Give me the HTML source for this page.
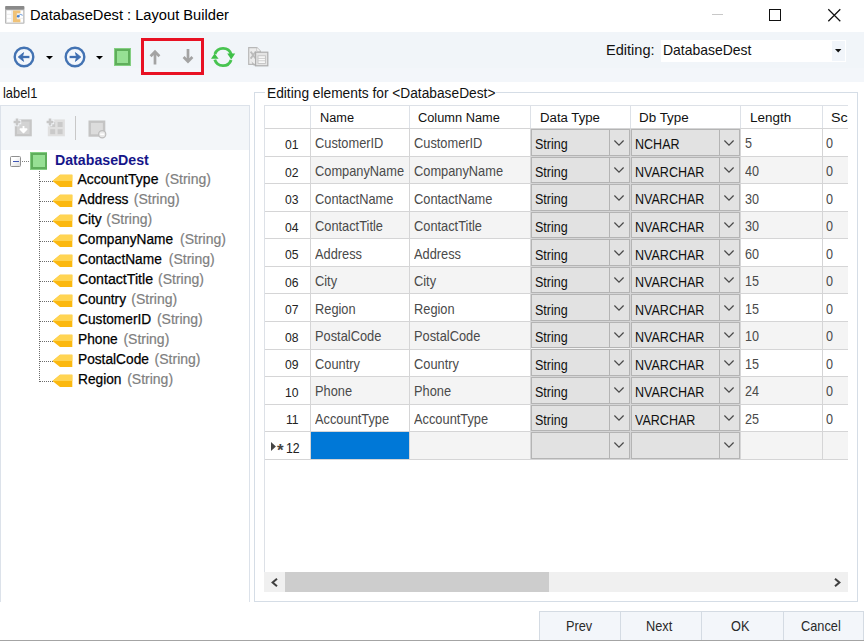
<!DOCTYPE html>
<html><head><meta charset="utf-8"><title>DatabaseDest : Layout Builder</title>
<style>
html,body{margin:0;padding:0;}
body{width:864px;height:641px;position:relative;overflow:hidden;background:#fff;font-family:"Liberation Sans",sans-serif;}
.t{position:absolute;white-space:pre;}
.b{position:absolute;box-sizing:border-box;}
svg{position:absolute;overflow:visible;}
</style></head><body>
<div class="t" style="left:30.00px;top:5.40px;font-size:15.5px;line-height:20px;color:#000;transform:scaleX(0.9466);transform-origin:0 0;">DatabaseDest : Layout Builder</div>
<svg style="left:5.2px;top:6px" width="20" height="18" viewBox="0 0 20 18">
<rect x="0" y="0" width="19.5" height="17.7" rx="1" fill="#b9b9b9"/>
<rect x="0.3" y="0" width="18.9" height="3.6" rx="1" fill="#8a8a8a"/>
<rect x="1.2" y="4.2" width="17.1" height="12.6" fill="#ececec"/>
<g fill="#fff"><rect x="2" y="4.8" width="4.2" height="3"/><rect x="2" y="8.8" width="4.2" height="3"/><rect x="2" y="12.8" width="4.2" height="3"/>
<rect x="14.6" y="4.8" width="3.4" height="3"/><rect x="14.6" y="8.8" width="3.4" height="3"/><rect x="14.6" y="12.8" width="3.4" height="3"/></g>
<path d="M8 4.6h7.4v2.6h-3.6v6h3.6v3H8z" fill="#f0c277"/>
<circle cx="13.2" cy="10.2" r="1.3" fill="#3c7bd0"/>
<path d="M13.4 10l2.2-1.6 2 1" fill="none" stroke="#5b93dd" stroke-width="0.9"/>
</svg>
<div class="b" style="left:711.50px;top:14.00px;width:11.70px;height:1.00px;background:#c8c8c8;"></div>
<div class="b" style="left:768.70px;top:8.80px;width:12.60px;height:12.20px;border:1.2px solid #111;"></div>
<svg style="left:828px;top:9px" width="13" height="13" viewBox="0 0 13 13"><path d="M0.3 0.3L12.3 12.3M12.3 0.3L0.3 12.3" stroke="#111" stroke-width="1.25" fill="none"/></svg>
<div class="b" style="left:0.00px;top:32.00px;width:864.00px;height:49.60px;background:#f1f5f9;"></div>
<div class="b" style="left:0.00px;top:67.80px;width:864.00px;height:13.80px;background:#f3f6fa;"></div>
<svg style="left:12.3px;top:45px" width="24" height="24" viewBox="-12 -12 24 24"><circle cx="0" cy="0" r="9.3" fill="#f3f7fc" stroke="#4373b3" stroke-width="2.4"/><path d="M5.4 0H-2" fill="none" stroke="#3f6fb2" stroke-width="2.3"/><path d="M-0.4 -4.4L-5.8 0L-0.4 4.4L-1.6 0z" fill="#3f6fb2" stroke="#3f6fb2" stroke-width="0.8" stroke-linejoin="round"/></svg>
<svg style="left:63.0px;top:45px" width="24" height="24" viewBox="-12 -12 24 24"><circle cx="0" cy="0" r="9.3" fill="#f3f7fc" stroke="#4373b3" stroke-width="2.4"/><path d="M-5.4 0H2" fill="none" stroke="#3f6fb2" stroke-width="2.3"/><path d="M0.4 -4.4L5.8 0L0.4 4.4L1.6 0z" fill="#3f6fb2" stroke="#3f6fb2" stroke-width="0.8" stroke-linejoin="round"/></svg>
<svg style="left:45.7px;top:55.800000000000004px" width="7" height="3.6" viewBox="0 0 7 3.6"><path d="M0 0H7L3.5 3.6z" fill="#000"/></svg>
<svg style="left:95.8px;top:55.800000000000004px" width="7" height="3.6" viewBox="0 0 7 3.6"><path d="M0 0H7L3.5 3.6z" fill="#000"/></svg>
<div class="b" style="left:114.00px;top:48.00px;width:17.00px;height:17.70px;background:#84cf82;"></div><div class="b" style="left:114.80px;top:48.80px;width:15.40px;height:16.10px;background:#97e094;border:2.7px solid #5fae5b;"></div>
<div class="b" style="left:140.90px;top:37.90px;width:63.10px;height:36.90px;border:3.8px solid #e81123;"></div>
<svg style="left:149.1px;top:50.0px" width="12" height="14.599999999999994" viewBox="-6 0 12 14.599999999999994"><path d="M0 14.599999999999994V2M-4.4 6.2L0 1.6L4.4 6.2" fill="none" stroke="#a3a3a3" stroke-width="2.7"/></svg>
<svg style="left:181.5px;top:49.4px" width="12" height="14.200000000000003" viewBox="-6 0 12 14.200000000000003"><path d="M0 0V12.200000000000003M-4.4 8.000000000000004L0 12.600000000000003L4.4 8.000000000000004" fill="none" stroke="#a3a3a3" stroke-width="2.7"/></svg>
<svg style="left:211px;top:45px" width="24" height="24" viewBox="-12 -12 24 24">
<path d="M-8.1 -2.9A8.6 8.6 0 0 1 8.2 -2.6" fill="none" stroke="#48c450" stroke-width="2.9"/>
<path d="M8.1 2.9A8.6 8.6 0 0 1 -8.2 2.6" fill="none" stroke="#48c450" stroke-width="2.9"/>
<path d="M4.2 -3.4L12.2 -3.4L8.2 2.6z" fill="#3fc047"/>
<path d="M-12 1.8L-4.4 1.8L-8.4 -3.6z" fill="#3fc047"/>
</svg>
<svg style="left:247.5px;top:47px" width="21" height="20" viewBox="0 0 21 20">
<path d="M0.7 0.7H8.8L12.4 4.2V17.4H0.7z" fill="#ececec" stroke="#b8b8b8" stroke-width="1.2"/>
<path d="M8.8 0.7V4.2H12.4" fill="#fff" stroke="#c4c4c4" stroke-width="0.9"/>
<path d="M2.6 4.6L7.8 11.6M7.8 4.6L2.6 11.6" stroke="#bcbcbc" stroke-width="1.8"/>
<rect x="7.6" y="5.2" width="12.2" height="13.6" fill="#e4e4e4" stroke="#adadad" stroke-width="1.2"/>
<rect x="10" y="8.8" width="7.4" height="7.6" fill="#fafafa" stroke="#c0c0c0" stroke-width="0.9"/>
<path d="M10 11.4H17.4M10 13.8H17.4" stroke="#c8c8c8" stroke-width="0.9"/>
<path d="M3.4 14.2L6.6 17.4L6.6 19.2L4.6 17.6z" fill="#b5b5b5"/>
</svg>
<div class="t" style="left:605.60px;top:39.90px;font-size:15px;line-height:20px;color:#111;transform:scaleX(0.9714);transform-origin:0 0;">Editing:</div>
<div class="b" style="left:661.40px;top:39.60px;width:184.60px;height:22.20px;background:#fff;"></div>
<div class="b" style="left:831.70px;top:40.60px;width:13.30px;height:20.20px;background:#f1f5fa;"></div>
<div class="t" style="left:662.90px;top:39.90px;font-size:15px;line-height:20px;color:#111;transform:scaleX(0.9300);transform-origin:0 0;">DatabaseDest</div>
<svg style="left:835.4px;top:48.9px" width="6.4" height="3.4" viewBox="0 0 6.4 3.4"><path d="M0 0H6.4L3.2 3.4z" fill="#111"/></svg>
<div class="t" style="left:2.60px;top:83.00px;font-size:14.5px;line-height:20px;color:#111;transform:scaleX(0.8889);transform-origin:0 0;">label1</div>
<div class="b" style="left:0.00px;top:104.70px;width:250.00px;height:497.50px;background:#fff;border:1px solid #dce2ea;border-bottom:none;"></div>
<div class="b" style="left:1.00px;top:105.70px;width:248.00px;height:44.70px;background:#f3f6f9;"></div>
<svg style="left:13.4px;top:118.4px" width="20" height="20" viewBox="0 0 20 20">
<rect x="1.8" y="1.4" width="17" height="16.9" fill="#c6c6c6"/>
<rect x="4" y="3.6" width="12.6" height="12.5" fill="#d3d3d3"/>
<path d="M10.5 8V11.6M7.4 11.2H13.6L10.5 14.4z" fill="#fff" stroke="#fff" stroke-width="1.8" stroke-linejoin="round"/>
<path d="M4 -0.2V8.2M-0.2 4H8.2" stroke="#f3f6f9" stroke-width="4.4"/><path d="M4 0.6V7.4M0.6 4H7.4" stroke="#c7c7c7" stroke-width="2.6"/>
</svg>
<svg style="left:46px;top:118.4px" width="20" height="20" viewBox="0 0 20 20">
<rect x="1.8" y="1.4" width="17.1" height="16.9" fill="#e0e0e0"/>
<g fill="#cacaca"><rect x="4.2" y="4" width="5" height="5"/><rect x="11.6" y="4" width="5" height="5"/><rect x="4.2" y="11.2" width="5" height="5"/><rect x="11.6" y="11.2" width="5" height="5"/></g>
<path d="M4 -0.2V8.2M-0.2 4H8.2" stroke="#f3f6f9" stroke-width="4.4"/><path d="M4 0.6V7.4M0.6 4H7.4" stroke="#c7c7c7" stroke-width="2.6"/>
</svg>
<div class="b" style="left:75.00px;top:116.00px;width:1.20px;height:23.50px;background:#c8c8c8;"></div>
<svg style="left:87.5px;top:119.5px" width="20" height="19" viewBox="0 0 20 19">
<rect x="1.7" y="1.7" width="14.4" height="13.8" fill="#dcdcdc" stroke="#c4c4c4" stroke-width="2.4"/>
<circle cx="14.2" cy="14.3" r="3.6" fill="#e9e9e9" stroke="#bdbdbd" stroke-width="1.2"/>
<path d="M12.2 14.3H16.2" stroke="#fff" stroke-width="1.5"/>
</svg>
<svg style="left:0;top:150px" width="250" height="250" viewBox="0 150 250 250"><path d="M22 161.5H30" stroke="#808080" stroke-width="1" stroke-dasharray="1 1"/><path d="M39.5 171V382" stroke="#6a6a6a" stroke-width="1" stroke-dasharray="1 1"/><path d="M40 181.5H53" stroke="#6a6a6a" stroke-width="1" stroke-dasharray="1 1"/><path d="M40 201.5H53" stroke="#6a6a6a" stroke-width="1" stroke-dasharray="1 1"/><path d="M40 221.5H53" stroke="#6a6a6a" stroke-width="1" stroke-dasharray="1 1"/><path d="M40 241.5H53" stroke="#6a6a6a" stroke-width="1" stroke-dasharray="1 1"/><path d="M40 261.5H53" stroke="#6a6a6a" stroke-width="1" stroke-dasharray="1 1"/><path d="M40 281.5H53" stroke="#6a6a6a" stroke-width="1" stroke-dasharray="1 1"/><path d="M40 301.5H53" stroke="#6a6a6a" stroke-width="1" stroke-dasharray="1 1"/><path d="M40 321.5H53" stroke="#6a6a6a" stroke-width="1" stroke-dasharray="1 1"/><path d="M40 341.5H53" stroke="#6a6a6a" stroke-width="1" stroke-dasharray="1 1"/><path d="M40 361.5H53" stroke="#6a6a6a" stroke-width="1" stroke-dasharray="1 1"/><path d="M40 381.5H53" stroke="#6a6a6a" stroke-width="1" stroke-dasharray="1 1"/></svg>
<div class="b" style="left:10.00px;top:156.00px;width:11.20px;height:11.00px;border:1px solid #8f8f8f;border-radius:1.5px;background:linear-gradient(135deg,#fff 30%,#dcdcdc);"></div>
<div class="b" style="left:12.50px;top:161.00px;width:6.40px;height:1.30px;background:#3f55b5;"></div>
<div class="b" style="left:30.20px;top:152.10px;width:17.20px;height:17.50px;background:#84cf82;"></div><div class="b" style="left:31.00px;top:152.90px;width:15.60px;height:15.90px;background:#97e094;border:2.7px solid #5fae5b;"></div>
<div class="t" style="left:55.00px;top:149.50px;font-size:14px;line-height:20px;color:#16168a;font-weight:bold;transform:scaleX(1.0124);transform-origin:0 0;">DatabaseDest</div>
<svg style="left:52px;top:174px" width="21" height="14" viewBox="0 0 21 14"><path d="M0.5 7.1L8 0.7H20.3V12.9H8z" fill="#fbb80f"/><path d="M0.5 7.1L8 0.7H20.3V7.1z" fill="#ffd452"/></svg>
<div class="t" style="left:77.50px;top:168.75px;font-size:14px;line-height:20px;color:#000;-webkit-text-stroke:0.25px #000;">AccountType</div>
<div class="t" style="left:165.00px;top:168.75px;font-size:14px;line-height:20px;color:#808080;-webkit-text-stroke:0.2px #808080;">(String)</div>
<svg style="left:52px;top:194px" width="21" height="14" viewBox="0 0 21 14"><path d="M0.5 7.1L8 0.7H20.3V12.9H8z" fill="#fbb80f"/><path d="M0.5 7.1L8 0.7H20.3V7.1z" fill="#ffd452"/></svg>
<div class="t" style="left:77.50px;top:188.75px;font-size:14px;line-height:20px;color:#000;transform:scaleX(0.9833);transform-origin:0 0;-webkit-text-stroke:0.25px #000;">Address</div>
<div class="t" style="left:133.75px;top:188.75px;font-size:14px;line-height:20px;color:#808080;-webkit-text-stroke:0.2px #808080;">(String)</div>
<svg style="left:52px;top:214px" width="21" height="14" viewBox="0 0 21 14"><path d="M0.5 7.1L8 0.7H20.3V12.9H8z" fill="#fbb80f"/><path d="M0.5 7.1L8 0.7H20.3V7.1z" fill="#ffd452"/></svg>
<div class="t" style="left:77.50px;top:208.75px;font-size:14px;line-height:20px;color:#000;transform:scaleX(0.9851);transform-origin:0 0;-webkit-text-stroke:0.25px #000;">City</div>
<div class="t" style="left:106.25px;top:208.75px;font-size:14px;line-height:20px;color:#808080;-webkit-text-stroke:0.2px #808080;">(String)</div>
<svg style="left:52px;top:234px" width="21" height="14" viewBox="0 0 21 14"><path d="M0.5 7.1L8 0.7H20.3V12.9H8z" fill="#fbb80f"/><path d="M0.5 7.1L8 0.7H20.3V7.1z" fill="#ffd452"/></svg>
<div class="t" style="left:77.50px;top:228.75px;font-size:14px;line-height:20px;color:#000;transform:scaleX(0.9767);transform-origin:0 0;-webkit-text-stroke:0.25px #000;">CompanyName</div>
<div class="t" style="left:180.00px;top:228.75px;font-size:14px;line-height:20px;color:#808080;-webkit-text-stroke:0.2px #808080;">(String)</div>
<svg style="left:52px;top:254px" width="21" height="14" viewBox="0 0 21 14"><path d="M0.5 7.1L8 0.7H20.3V12.9H8z" fill="#fbb80f"/><path d="M0.5 7.1L8 0.7H20.3V7.1z" fill="#ffd452"/></svg>
<div class="t" style="left:77.50px;top:248.75px;font-size:14px;line-height:20px;color:#000;transform:scaleX(0.9785);transform-origin:0 0;-webkit-text-stroke:0.25px #000;">ContactName</div>
<div class="t" style="left:168.75px;top:248.75px;font-size:14px;line-height:20px;color:#808080;-webkit-text-stroke:0.2px #808080;">(String)</div>
<svg style="left:52px;top:274px" width="21" height="14" viewBox="0 0 21 14"><path d="M0.5 7.1L8 0.7H20.3V12.9H8z" fill="#fbb80f"/><path d="M0.5 7.1L8 0.7H20.3V7.1z" fill="#ffd452"/></svg>
<div class="t" style="left:77.50px;top:268.75px;font-size:14px;line-height:20px;color:#000;transform:scaleX(1.0111);transform-origin:0 0;-webkit-text-stroke:0.25px #000;">ContactTitle</div>
<div class="t" style="left:158.00px;top:268.75px;font-size:14px;line-height:20px;color:#808080;-webkit-text-stroke:0.2px #808080;">(String)</div>
<svg style="left:52px;top:294px" width="21" height="14" viewBox="0 0 21 14"><path d="M0.5 7.1L8 0.7H20.3V12.9H8z" fill="#fbb80f"/><path d="M0.5 7.1L8 0.7H20.3V7.1z" fill="#ffd452"/></svg>
<div class="t" style="left:77.50px;top:288.75px;font-size:14px;line-height:20px;color:#000;transform:scaleX(0.9792);transform-origin:0 0;-webkit-text-stroke:0.25px #000;">Country</div>
<div class="t" style="left:131.25px;top:288.75px;font-size:14px;line-height:20px;color:#808080;-webkit-text-stroke:0.2px #808080;">(String)</div>
<svg style="left:52px;top:314px" width="21" height="14" viewBox="0 0 21 14"><path d="M0.5 7.1L8 0.7H20.3V12.9H8z" fill="#fbb80f"/><path d="M0.5 7.1L8 0.7H20.3V7.1z" fill="#ffd452"/></svg>
<div class="t" style="left:77.50px;top:308.75px;font-size:14px;line-height:20px;color:#000;transform:scaleX(0.9799);transform-origin:0 0;-webkit-text-stroke:0.25px #000;">CustomerID</div>
<div class="t" style="left:156.88px;top:308.75px;font-size:14px;line-height:20px;color:#808080;-webkit-text-stroke:0.2px #808080;">(String)</div>
<svg style="left:52px;top:334px" width="21" height="14" viewBox="0 0 21 14"><path d="M0.5 7.1L8 0.7H20.3V12.9H8z" fill="#fbb80f"/><path d="M0.5 7.1L8 0.7H20.3V7.1z" fill="#ffd452"/></svg>
<div class="t" style="left:77.50px;top:328.75px;font-size:14px;line-height:20px;color:#000;transform:scaleX(0.9815);transform-origin:0 0;-webkit-text-stroke:0.25px #000;">Phone</div>
<div class="t" style="left:123.43px;top:328.75px;font-size:14px;line-height:20px;color:#808080;-webkit-text-stroke:0.2px #808080;">(String)</div>
<svg style="left:52px;top:354px" width="21" height="14" viewBox="0 0 21 14"><path d="M0.5 7.1L8 0.7H20.3V12.9H8z" fill="#fbb80f"/><path d="M0.5 7.1L8 0.7H20.3V7.1z" fill="#ffd452"/></svg>
<div class="t" style="left:77.50px;top:348.75px;font-size:14px;line-height:20px;color:#000;transform:scaleX(0.9793);transform-origin:0 0;-webkit-text-stroke:0.25px #000;">PostalCode</div>
<div class="t" style="left:154.58px;top:348.75px;font-size:14px;line-height:20px;color:#808080;-webkit-text-stroke:0.2px #808080;">(String)</div>
<svg style="left:52px;top:374px" width="21" height="14" viewBox="0 0 21 14"><path d="M0.5 7.1L8 0.7H20.3V12.9H8z" fill="#fbb80f"/><path d="M0.5 7.1L8 0.7H20.3V7.1z" fill="#ffd452"/></svg>
<div class="t" style="left:77.50px;top:368.75px;font-size:14px;line-height:20px;color:#000;transform:scaleX(0.9797);transform-origin:0 0;-webkit-text-stroke:0.25px #000;">Region</div>
<div class="t" style="left:127.17px;top:368.75px;font-size:14px;line-height:20px;color:#808080;-webkit-text-stroke:0.2px #808080;">(String)</div>
<div class="b" style="left:253.90px;top:92.20px;width:603.80px;height:509.80px;border:1px solid #d5dde6;"></div>
<div class="b" style="left:265.00px;top:86.00px;width:230.60px;height:14.00px;background:#fff;"></div>
<div class="t" style="left:266.80px;top:83.40px;font-size:14px;line-height:20px;color:#111;transform:scaleX(0.9816);transform-origin:0 0;">Editing elements for &lt;DatabaseDest&gt;</div>
<div class="b" style="left:0;top:0;width:848px;height:641px;overflow:hidden;">
<div class="b" style="left:310.60px;top:156.29px;width:537.40px;height:27.54px;background:#f4f4f4;"></div>
<div class="b" style="left:310.60px;top:211.37px;width:537.40px;height:27.54px;background:#f4f4f4;"></div>
<div class="b" style="left:310.60px;top:266.45px;width:537.40px;height:27.54px;background:#f4f4f4;"></div>
<div class="b" style="left:310.60px;top:321.53px;width:537.40px;height:27.54px;background:#f4f4f4;"></div>
<div class="b" style="left:310.60px;top:376.61px;width:537.40px;height:27.54px;background:#f4f4f4;"></div>
<div class="b" style="left:310.60px;top:431.69px;width:537.40px;height:27.54px;background:#f4f4f4;"></div>
<div class="b" style="left:311.30px;top:432.29px;width:97.90px;height:26.74px;background:#0078d7;"></div>
<div class="b" style="left:264.25px;top:104.60px;width:583.75px;height:1.30px;background:#dde1e7;"></div>
<div class="b" style="left:264.25px;top:127.70px;width:583.75px;height:1.45px;background:#d5d5d6;"></div>
<div class="b" style="left:264.25px;top:155.70px;width:583.75px;height:1.45px;background:#d5d5d6;"></div>
<div class="b" style="left:264.25px;top:182.70px;width:583.75px;height:1.45px;background:#d5d5d6;"></div>
<div class="b" style="left:264.25px;top:210.70px;width:583.75px;height:1.45px;background:#d5d5d6;"></div>
<div class="b" style="left:264.25px;top:237.70px;width:583.75px;height:1.45px;background:#d5d5d6;"></div>
<div class="b" style="left:264.25px;top:265.70px;width:583.75px;height:1.45px;background:#d5d5d6;"></div>
<div class="b" style="left:264.25px;top:292.70px;width:583.75px;height:1.45px;background:#d5d5d6;"></div>
<div class="b" style="left:264.25px;top:320.70px;width:583.75px;height:1.45px;background:#d5d5d6;"></div>
<div class="b" style="left:264.25px;top:348.70px;width:583.75px;height:1.45px;background:#d5d5d6;"></div>
<div class="b" style="left:264.25px;top:375.70px;width:583.75px;height:1.45px;background:#d5d5d6;"></div>
<div class="b" style="left:264.25px;top:403.70px;width:583.75px;height:1.45px;background:#d5d5d6;"></div>
<div class="b" style="left:264.25px;top:430.70px;width:583.75px;height:1.45px;background:#d5d5d6;"></div>
<div class="b" style="left:264.25px;top:458.70px;width:583.75px;height:1.45px;background:#d5d5d6;"></div>
<div class="b" style="left:263.75px;top:105.20px;width:1.30px;height:466.80px;background:#dde1e7;"></div>
<div class="b" style="left:309.95px;top:128.75px;width:1.30px;height:330.48px;background:#d5d5d6;"></div>
<div class="b" style="left:309.95px;top:105.20px;width:1.30px;height:22.95px;background:#dde1e7;"></div>
<div class="b" style="left:408.85px;top:128.75px;width:1.30px;height:330.48px;background:#d5d5d6;"></div>
<div class="b" style="left:408.85px;top:105.20px;width:1.30px;height:22.95px;background:#dde1e7;"></div>
<div class="b" style="left:530.10px;top:128.75px;width:1.30px;height:330.48px;background:#d5d5d6;"></div>
<div class="b" style="left:530.10px;top:105.20px;width:1.30px;height:22.95px;background:#dde1e7;"></div>
<div class="b" style="left:629.85px;top:128.75px;width:1.30px;height:330.48px;background:#d5d5d6;"></div>
<div class="b" style="left:629.85px;top:105.20px;width:1.30px;height:22.95px;background:#dde1e7;"></div>
<div class="b" style="left:739.85px;top:128.75px;width:1.30px;height:330.48px;background:#d5d5d6;"></div>
<div class="b" style="left:739.85px;top:105.20px;width:1.30px;height:22.95px;background:#dde1e7;"></div>
<div class="b" style="left:821.60px;top:128.75px;width:1.30px;height:330.48px;background:#d5d5d6;"></div>
<div class="b" style="left:821.60px;top:105.20px;width:1.30px;height:22.95px;background:#dde1e7;"></div>
<div class="t" style="left:319.90px;top:107.70px;font-size:12px;line-height:20px;color:#111;transform:scaleX(1.0622);transform-origin:0 0;">Name</div>
<div class="t" style="left:418.00px;top:107.70px;font-size:12px;line-height:20px;color:#111;transform:scaleX(1.0666);transform-origin:0 0;">Column Name</div>
<div class="t" style="left:539.95px;top:107.70px;font-size:12px;line-height:20px;color:#111;transform:scaleX(1.1004);transform-origin:0 0;">Data Type</div>
<div class="t" style="left:639.20px;top:107.70px;font-size:12px;line-height:20px;color:#111;transform:scaleX(1.1175);transform-origin:0 0;">Db Type</div>
<div class="t" style="left:750.20px;top:107.70px;font-size:12px;line-height:20px;color:#111;transform:scaleX(1.1225);transform-origin:0 0;">Length</div>
<div class="t" style="left:831.45px;top:107.70px;font-size:12px;line-height:20px;color:#111;transform:scaleX(1.1900);transform-origin:0 0;">Scale</div>
<div class="t" style="left:285.29px;top:135.00px;font-size:13.5px;line-height:20px;color:#222;transform:scaleX(0.9000);transform-origin:0 0;">01</div>
<div class="t" style="left:314.50px;top:133.45px;font-size:14.5px;line-height:20px;color:#4a4a4a;transform:scaleX(0.8840);transform-origin:0 0;">CustomerID</div>
<div class="t" style="left:413.50px;top:133.45px;font-size:14.5px;line-height:20px;color:#4a4a4a;transform:scaleX(0.8840);transform-origin:0 0;">CustomerID</div>
<div class="b" style="left:531.10px;top:129.15px;width:98.60px;height:26.54px;background:#e2e2e2;border:1.5px solid #b4b4b4;"></div>
<div class="b" style="left:608.90px;top:129.75px;width:1.20px;height:25.54px;background:#b4b4b4;"></div>
<svg style="left:613.9px;top:139.52px" width="10" height="6" viewBox="0 0 10 6"><path d="M0.4 0.5L5 5.2L9.6 0.5" fill="none" stroke="#4a4a4a" stroke-width="1.25"/></svg>
<div class="t" style="left:534.80px;top:134.35px;font-size:14px;line-height:20px;color:#111;transform:scaleX(0.8950);transform-origin:0 0;">String</div>
<div class="b" style="left:631.00px;top:129.15px;width:108.80px;height:26.54px;background:#e2e2e2;border:1.5px solid #b4b4b4;"></div>
<div class="b" style="left:718.70px;top:129.75px;width:1.20px;height:25.54px;background:#b4b4b4;"></div>
<svg style="left:723.8499999999999px;top:139.52px" width="10" height="6" viewBox="0 0 10 6"><path d="M0.4 0.5L5 5.2L9.6 0.5" fill="none" stroke="#4a4a4a" stroke-width="1.25"/></svg>
<div class="t" style="left:635.05px;top:134.35px;font-size:14px;line-height:20px;color:#111;transform:scaleX(0.8950);transform-origin:0 0;">NCHAR</div>
<div class="t" style="left:745.30px;top:133.45px;font-size:14.5px;line-height:20px;color:#4a4a4a;transform:scaleX(0.8700);transform-origin:0 0;">5</div>
<div class="t" style="left:826.00px;top:133.45px;font-size:14.5px;line-height:20px;color:#4a4a4a;transform:scaleX(0.8700);transform-origin:0 0;">0</div>
<div class="t" style="left:285.29px;top:162.54px;font-size:13.5px;line-height:20px;color:#222;transform:scaleX(0.9000);transform-origin:0 0;">02</div>
<div class="t" style="left:314.50px;top:160.99px;font-size:14.5px;line-height:20px;color:#4a4a4a;transform:scaleX(0.8840);transform-origin:0 0;">CompanyName</div>
<div class="t" style="left:413.50px;top:160.99px;font-size:14.5px;line-height:20px;color:#4a4a4a;transform:scaleX(0.8840);transform-origin:0 0;">CompanyName</div>
<div class="b" style="left:531.10px;top:156.69px;width:98.60px;height:26.54px;background:#e2e2e2;border:1.5px solid #b4b4b4;"></div>
<div class="b" style="left:608.90px;top:157.29px;width:1.20px;height:25.54px;background:#b4b4b4;"></div>
<svg style="left:613.9px;top:167.06px" width="10" height="6" viewBox="0 0 10 6"><path d="M0.4 0.5L5 5.2L9.6 0.5" fill="none" stroke="#4a4a4a" stroke-width="1.25"/></svg>
<div class="t" style="left:534.80px;top:161.89px;font-size:14px;line-height:20px;color:#111;transform:scaleX(0.8950);transform-origin:0 0;">String</div>
<div class="b" style="left:631.00px;top:156.69px;width:108.80px;height:26.54px;background:#e2e2e2;border:1.5px solid #b4b4b4;"></div>
<div class="b" style="left:718.70px;top:157.29px;width:1.20px;height:25.54px;background:#b4b4b4;"></div>
<svg style="left:723.8499999999999px;top:167.06px" width="10" height="6" viewBox="0 0 10 6"><path d="M0.4 0.5L5 5.2L9.6 0.5" fill="none" stroke="#4a4a4a" stroke-width="1.25"/></svg>
<div class="t" style="left:635.05px;top:161.89px;font-size:14px;line-height:20px;color:#111;transform:scaleX(0.8950);transform-origin:0 0;">NVARCHAR</div>
<div class="t" style="left:745.30px;top:160.99px;font-size:14.5px;line-height:20px;color:#4a4a4a;transform:scaleX(0.8700);transform-origin:0 0;">40</div>
<div class="t" style="left:826.00px;top:160.99px;font-size:14.5px;line-height:20px;color:#4a4a4a;transform:scaleX(0.8700);transform-origin:0 0;">0</div>
<div class="t" style="left:285.29px;top:190.08px;font-size:13.5px;line-height:20px;color:#222;transform:scaleX(0.9000);transform-origin:0 0;">03</div>
<div class="t" style="left:314.50px;top:188.53px;font-size:14.5px;line-height:20px;color:#4a4a4a;transform:scaleX(0.8840);transform-origin:0 0;">ContactName</div>
<div class="t" style="left:413.50px;top:188.53px;font-size:14.5px;line-height:20px;color:#4a4a4a;transform:scaleX(0.8840);transform-origin:0 0;">ContactName</div>
<div class="b" style="left:531.10px;top:184.23px;width:98.60px;height:26.54px;background:#e2e2e2;border:1.5px solid #b4b4b4;"></div>
<div class="b" style="left:608.90px;top:184.83px;width:1.20px;height:25.54px;background:#b4b4b4;"></div>
<svg style="left:613.9px;top:194.6px" width="10" height="6" viewBox="0 0 10 6"><path d="M0.4 0.5L5 5.2L9.6 0.5" fill="none" stroke="#4a4a4a" stroke-width="1.25"/></svg>
<div class="t" style="left:534.80px;top:189.43px;font-size:14px;line-height:20px;color:#111;transform:scaleX(0.8950);transform-origin:0 0;">String</div>
<div class="b" style="left:631.00px;top:184.23px;width:108.80px;height:26.54px;background:#e2e2e2;border:1.5px solid #b4b4b4;"></div>
<div class="b" style="left:718.70px;top:184.83px;width:1.20px;height:25.54px;background:#b4b4b4;"></div>
<svg style="left:723.8499999999999px;top:194.6px" width="10" height="6" viewBox="0 0 10 6"><path d="M0.4 0.5L5 5.2L9.6 0.5" fill="none" stroke="#4a4a4a" stroke-width="1.25"/></svg>
<div class="t" style="left:635.05px;top:189.43px;font-size:14px;line-height:20px;color:#111;transform:scaleX(0.8950);transform-origin:0 0;">NVARCHAR</div>
<div class="t" style="left:745.30px;top:188.53px;font-size:14.5px;line-height:20px;color:#4a4a4a;transform:scaleX(0.8700);transform-origin:0 0;">30</div>
<div class="t" style="left:826.00px;top:188.53px;font-size:14.5px;line-height:20px;color:#4a4a4a;transform:scaleX(0.8700);transform-origin:0 0;">0</div>
<div class="t" style="left:285.29px;top:217.62px;font-size:13.5px;line-height:20px;color:#222;transform:scaleX(0.9000);transform-origin:0 0;">04</div>
<div class="t" style="left:314.50px;top:216.07px;font-size:14.5px;line-height:20px;color:#4a4a4a;transform:scaleX(0.8840);transform-origin:0 0;">ContactTitle</div>
<div class="t" style="left:413.50px;top:216.07px;font-size:14.5px;line-height:20px;color:#4a4a4a;transform:scaleX(0.8840);transform-origin:0 0;">ContactTitle</div>
<div class="b" style="left:531.10px;top:211.77px;width:98.60px;height:26.54px;background:#e2e2e2;border:1.5px solid #b4b4b4;"></div>
<div class="b" style="left:608.90px;top:212.37px;width:1.20px;height:25.54px;background:#b4b4b4;"></div>
<svg style="left:613.9px;top:222.14000000000001px" width="10" height="6" viewBox="0 0 10 6"><path d="M0.4 0.5L5 5.2L9.6 0.5" fill="none" stroke="#4a4a4a" stroke-width="1.25"/></svg>
<div class="t" style="left:534.80px;top:216.97px;font-size:14px;line-height:20px;color:#111;transform:scaleX(0.8950);transform-origin:0 0;">String</div>
<div class="b" style="left:631.00px;top:211.77px;width:108.80px;height:26.54px;background:#e2e2e2;border:1.5px solid #b4b4b4;"></div>
<div class="b" style="left:718.70px;top:212.37px;width:1.20px;height:25.54px;background:#b4b4b4;"></div>
<svg style="left:723.8499999999999px;top:222.14000000000001px" width="10" height="6" viewBox="0 0 10 6"><path d="M0.4 0.5L5 5.2L9.6 0.5" fill="none" stroke="#4a4a4a" stroke-width="1.25"/></svg>
<div class="t" style="left:635.05px;top:216.97px;font-size:14px;line-height:20px;color:#111;transform:scaleX(0.8950);transform-origin:0 0;">NVARCHAR</div>
<div class="t" style="left:745.30px;top:216.07px;font-size:14.5px;line-height:20px;color:#4a4a4a;transform:scaleX(0.8700);transform-origin:0 0;">30</div>
<div class="t" style="left:826.00px;top:216.07px;font-size:14.5px;line-height:20px;color:#4a4a4a;transform:scaleX(0.8700);transform-origin:0 0;">0</div>
<div class="t" style="left:285.29px;top:245.16px;font-size:13.5px;line-height:20px;color:#222;transform:scaleX(0.9000);transform-origin:0 0;">05</div>
<div class="t" style="left:314.50px;top:243.61px;font-size:14.5px;line-height:20px;color:#4a4a4a;transform:scaleX(0.8840);transform-origin:0 0;">Address</div>
<div class="t" style="left:413.50px;top:243.61px;font-size:14.5px;line-height:20px;color:#4a4a4a;transform:scaleX(0.8840);transform-origin:0 0;">Address</div>
<div class="b" style="left:531.10px;top:239.31px;width:98.60px;height:26.54px;background:#e2e2e2;border:1.5px solid #b4b4b4;"></div>
<div class="b" style="left:608.90px;top:239.91px;width:1.20px;height:25.54px;background:#b4b4b4;"></div>
<svg style="left:613.9px;top:249.68px" width="10" height="6" viewBox="0 0 10 6"><path d="M0.4 0.5L5 5.2L9.6 0.5" fill="none" stroke="#4a4a4a" stroke-width="1.25"/></svg>
<div class="t" style="left:534.80px;top:244.51px;font-size:14px;line-height:20px;color:#111;transform:scaleX(0.8950);transform-origin:0 0;">String</div>
<div class="b" style="left:631.00px;top:239.31px;width:108.80px;height:26.54px;background:#e2e2e2;border:1.5px solid #b4b4b4;"></div>
<div class="b" style="left:718.70px;top:239.91px;width:1.20px;height:25.54px;background:#b4b4b4;"></div>
<svg style="left:723.8499999999999px;top:249.68px" width="10" height="6" viewBox="0 0 10 6"><path d="M0.4 0.5L5 5.2L9.6 0.5" fill="none" stroke="#4a4a4a" stroke-width="1.25"/></svg>
<div class="t" style="left:635.05px;top:244.51px;font-size:14px;line-height:20px;color:#111;transform:scaleX(0.8950);transform-origin:0 0;">NVARCHAR</div>
<div class="t" style="left:745.30px;top:243.61px;font-size:14.5px;line-height:20px;color:#4a4a4a;transform:scaleX(0.8700);transform-origin:0 0;">60</div>
<div class="t" style="left:826.00px;top:243.61px;font-size:14.5px;line-height:20px;color:#4a4a4a;transform:scaleX(0.8700);transform-origin:0 0;">0</div>
<div class="t" style="left:285.29px;top:272.70px;font-size:13.5px;line-height:20px;color:#222;transform:scaleX(0.9000);transform-origin:0 0;">06</div>
<div class="t" style="left:314.50px;top:271.15px;font-size:14.5px;line-height:20px;color:#4a4a4a;transform:scaleX(0.8840);transform-origin:0 0;">City</div>
<div class="t" style="left:413.50px;top:271.15px;font-size:14.5px;line-height:20px;color:#4a4a4a;transform:scaleX(0.8840);transform-origin:0 0;">City</div>
<div class="b" style="left:531.10px;top:266.85px;width:98.60px;height:26.54px;background:#e2e2e2;border:1.5px solid #b4b4b4;"></div>
<div class="b" style="left:608.90px;top:267.45px;width:1.20px;height:25.54px;background:#b4b4b4;"></div>
<svg style="left:613.9px;top:277.21999999999997px" width="10" height="6" viewBox="0 0 10 6"><path d="M0.4 0.5L5 5.2L9.6 0.5" fill="none" stroke="#4a4a4a" stroke-width="1.25"/></svg>
<div class="t" style="left:534.80px;top:272.05px;font-size:14px;line-height:20px;color:#111;transform:scaleX(0.8950);transform-origin:0 0;">String</div>
<div class="b" style="left:631.00px;top:266.85px;width:108.80px;height:26.54px;background:#e2e2e2;border:1.5px solid #b4b4b4;"></div>
<div class="b" style="left:718.70px;top:267.45px;width:1.20px;height:25.54px;background:#b4b4b4;"></div>
<svg style="left:723.8499999999999px;top:277.21999999999997px" width="10" height="6" viewBox="0 0 10 6"><path d="M0.4 0.5L5 5.2L9.6 0.5" fill="none" stroke="#4a4a4a" stroke-width="1.25"/></svg>
<div class="t" style="left:635.05px;top:272.05px;font-size:14px;line-height:20px;color:#111;transform:scaleX(0.8950);transform-origin:0 0;">NVARCHAR</div>
<div class="t" style="left:745.30px;top:271.15px;font-size:14.5px;line-height:20px;color:#4a4a4a;transform:scaleX(0.8700);transform-origin:0 0;">15</div>
<div class="t" style="left:826.00px;top:271.15px;font-size:14.5px;line-height:20px;color:#4a4a4a;transform:scaleX(0.8700);transform-origin:0 0;">0</div>
<div class="t" style="left:285.29px;top:300.24px;font-size:13.5px;line-height:20px;color:#222;transform:scaleX(0.9000);transform-origin:0 0;">07</div>
<div class="t" style="left:314.50px;top:298.69px;font-size:14.5px;line-height:20px;color:#4a4a4a;transform:scaleX(0.8840);transform-origin:0 0;">Region</div>
<div class="t" style="left:413.50px;top:298.69px;font-size:14.5px;line-height:20px;color:#4a4a4a;transform:scaleX(0.8840);transform-origin:0 0;">Region</div>
<div class="b" style="left:531.10px;top:294.39px;width:98.60px;height:26.54px;background:#e2e2e2;border:1.5px solid #b4b4b4;"></div>
<div class="b" style="left:608.90px;top:294.99px;width:1.20px;height:25.54px;background:#b4b4b4;"></div>
<svg style="left:613.9px;top:304.76px" width="10" height="6" viewBox="0 0 10 6"><path d="M0.4 0.5L5 5.2L9.6 0.5" fill="none" stroke="#4a4a4a" stroke-width="1.25"/></svg>
<div class="t" style="left:534.80px;top:299.59px;font-size:14px;line-height:20px;color:#111;transform:scaleX(0.8950);transform-origin:0 0;">String</div>
<div class="b" style="left:631.00px;top:294.39px;width:108.80px;height:26.54px;background:#e2e2e2;border:1.5px solid #b4b4b4;"></div>
<div class="b" style="left:718.70px;top:294.99px;width:1.20px;height:25.54px;background:#b4b4b4;"></div>
<svg style="left:723.8499999999999px;top:304.76px" width="10" height="6" viewBox="0 0 10 6"><path d="M0.4 0.5L5 5.2L9.6 0.5" fill="none" stroke="#4a4a4a" stroke-width="1.25"/></svg>
<div class="t" style="left:635.05px;top:299.59px;font-size:14px;line-height:20px;color:#111;transform:scaleX(0.8950);transform-origin:0 0;">NVARCHAR</div>
<div class="t" style="left:745.30px;top:298.69px;font-size:14.5px;line-height:20px;color:#4a4a4a;transform:scaleX(0.8700);transform-origin:0 0;">15</div>
<div class="t" style="left:826.00px;top:298.69px;font-size:14.5px;line-height:20px;color:#4a4a4a;transform:scaleX(0.8700);transform-origin:0 0;">0</div>
<div class="t" style="left:285.29px;top:327.78px;font-size:13.5px;line-height:20px;color:#222;transform:scaleX(0.9000);transform-origin:0 0;">08</div>
<div class="t" style="left:314.50px;top:326.23px;font-size:14.5px;line-height:20px;color:#4a4a4a;transform:scaleX(0.8840);transform-origin:0 0;">PostalCode</div>
<div class="t" style="left:413.50px;top:326.23px;font-size:14.5px;line-height:20px;color:#4a4a4a;transform:scaleX(0.8840);transform-origin:0 0;">PostalCode</div>
<div class="b" style="left:531.10px;top:321.93px;width:98.60px;height:26.54px;background:#e2e2e2;border:1.5px solid #b4b4b4;"></div>
<div class="b" style="left:608.90px;top:322.53px;width:1.20px;height:25.54px;background:#b4b4b4;"></div>
<svg style="left:613.9px;top:332.29999999999995px" width="10" height="6" viewBox="0 0 10 6"><path d="M0.4 0.5L5 5.2L9.6 0.5" fill="none" stroke="#4a4a4a" stroke-width="1.25"/></svg>
<div class="t" style="left:534.80px;top:327.13px;font-size:14px;line-height:20px;color:#111;transform:scaleX(0.8950);transform-origin:0 0;">String</div>
<div class="b" style="left:631.00px;top:321.93px;width:108.80px;height:26.54px;background:#e2e2e2;border:1.5px solid #b4b4b4;"></div>
<div class="b" style="left:718.70px;top:322.53px;width:1.20px;height:25.54px;background:#b4b4b4;"></div>
<svg style="left:723.8499999999999px;top:332.29999999999995px" width="10" height="6" viewBox="0 0 10 6"><path d="M0.4 0.5L5 5.2L9.6 0.5" fill="none" stroke="#4a4a4a" stroke-width="1.25"/></svg>
<div class="t" style="left:635.05px;top:327.13px;font-size:14px;line-height:20px;color:#111;transform:scaleX(0.8950);transform-origin:0 0;">NVARCHAR</div>
<div class="t" style="left:745.30px;top:326.23px;font-size:14.5px;line-height:20px;color:#4a4a4a;transform:scaleX(0.8700);transform-origin:0 0;">10</div>
<div class="t" style="left:826.00px;top:326.23px;font-size:14.5px;line-height:20px;color:#4a4a4a;transform:scaleX(0.8700);transform-origin:0 0;">0</div>
<div class="t" style="left:285.29px;top:355.32px;font-size:13.5px;line-height:20px;color:#222;transform:scaleX(0.9000);transform-origin:0 0;">09</div>
<div class="t" style="left:314.50px;top:353.77px;font-size:14.5px;line-height:20px;color:#4a4a4a;transform:scaleX(0.8840);transform-origin:0 0;">Country</div>
<div class="t" style="left:413.50px;top:353.77px;font-size:14.5px;line-height:20px;color:#4a4a4a;transform:scaleX(0.8840);transform-origin:0 0;">Country</div>
<div class="b" style="left:531.10px;top:349.47px;width:98.60px;height:26.54px;background:#e2e2e2;border:1.5px solid #b4b4b4;"></div>
<div class="b" style="left:608.90px;top:350.07px;width:1.20px;height:25.54px;background:#b4b4b4;"></div>
<svg style="left:613.9px;top:359.84px" width="10" height="6" viewBox="0 0 10 6"><path d="M0.4 0.5L5 5.2L9.6 0.5" fill="none" stroke="#4a4a4a" stroke-width="1.25"/></svg>
<div class="t" style="left:534.80px;top:354.67px;font-size:14px;line-height:20px;color:#111;transform:scaleX(0.8950);transform-origin:0 0;">String</div>
<div class="b" style="left:631.00px;top:349.47px;width:108.80px;height:26.54px;background:#e2e2e2;border:1.5px solid #b4b4b4;"></div>
<div class="b" style="left:718.70px;top:350.07px;width:1.20px;height:25.54px;background:#b4b4b4;"></div>
<svg style="left:723.8499999999999px;top:359.84px" width="10" height="6" viewBox="0 0 10 6"><path d="M0.4 0.5L5 5.2L9.6 0.5" fill="none" stroke="#4a4a4a" stroke-width="1.25"/></svg>
<div class="t" style="left:635.05px;top:354.67px;font-size:14px;line-height:20px;color:#111;transform:scaleX(0.8950);transform-origin:0 0;">NVARCHAR</div>
<div class="t" style="left:745.30px;top:353.77px;font-size:14.5px;line-height:20px;color:#4a4a4a;transform:scaleX(0.8700);transform-origin:0 0;">15</div>
<div class="t" style="left:826.00px;top:353.77px;font-size:14.5px;line-height:20px;color:#4a4a4a;transform:scaleX(0.8700);transform-origin:0 0;">0</div>
<div class="t" style="left:285.29px;top:382.86px;font-size:13.5px;line-height:20px;color:#222;transform:scaleX(0.9000);transform-origin:0 0;">10</div>
<div class="t" style="left:314.50px;top:381.31px;font-size:14.5px;line-height:20px;color:#4a4a4a;transform:scaleX(0.8840);transform-origin:0 0;">Phone</div>
<div class="t" style="left:413.50px;top:381.31px;font-size:14.5px;line-height:20px;color:#4a4a4a;transform:scaleX(0.8840);transform-origin:0 0;">Phone</div>
<div class="b" style="left:531.10px;top:377.01px;width:98.60px;height:26.54px;background:#e2e2e2;border:1.5px solid #b4b4b4;"></div>
<div class="b" style="left:608.90px;top:377.61px;width:1.20px;height:25.54px;background:#b4b4b4;"></div>
<svg style="left:613.9px;top:387.38px" width="10" height="6" viewBox="0 0 10 6"><path d="M0.4 0.5L5 5.2L9.6 0.5" fill="none" stroke="#4a4a4a" stroke-width="1.25"/></svg>
<div class="t" style="left:534.80px;top:382.21px;font-size:14px;line-height:20px;color:#111;transform:scaleX(0.8950);transform-origin:0 0;">String</div>
<div class="b" style="left:631.00px;top:377.01px;width:108.80px;height:26.54px;background:#e2e2e2;border:1.5px solid #b4b4b4;"></div>
<div class="b" style="left:718.70px;top:377.61px;width:1.20px;height:25.54px;background:#b4b4b4;"></div>
<svg style="left:723.8499999999999px;top:387.38px" width="10" height="6" viewBox="0 0 10 6"><path d="M0.4 0.5L5 5.2L9.6 0.5" fill="none" stroke="#4a4a4a" stroke-width="1.25"/></svg>
<div class="t" style="left:635.05px;top:382.21px;font-size:14px;line-height:20px;color:#111;transform:scaleX(0.8950);transform-origin:0 0;">NVARCHAR</div>
<div class="t" style="left:745.30px;top:381.31px;font-size:14.5px;line-height:20px;color:#4a4a4a;transform:scaleX(0.8700);transform-origin:0 0;">24</div>
<div class="t" style="left:826.00px;top:381.31px;font-size:14.5px;line-height:20px;color:#4a4a4a;transform:scaleX(0.8700);transform-origin:0 0;">0</div>
<div class="t" style="left:286.19px;top:410.40px;font-size:13.5px;line-height:20px;color:#222;transform:scaleX(0.9000);transform-origin:0 0;">11</div>
<div class="t" style="left:314.50px;top:408.85px;font-size:14.5px;line-height:20px;color:#4a4a4a;transform:scaleX(0.8840);transform-origin:0 0;">AccountType</div>
<div class="t" style="left:413.50px;top:408.85px;font-size:14.5px;line-height:20px;color:#4a4a4a;transform:scaleX(0.8840);transform-origin:0 0;">AccountType</div>
<div class="b" style="left:531.10px;top:404.55px;width:98.60px;height:26.54px;background:#e2e2e2;border:1.5px solid #b4b4b4;"></div>
<div class="b" style="left:608.90px;top:405.15px;width:1.20px;height:25.54px;background:#b4b4b4;"></div>
<svg style="left:613.9px;top:414.91999999999996px" width="10" height="6" viewBox="0 0 10 6"><path d="M0.4 0.5L5 5.2L9.6 0.5" fill="none" stroke="#4a4a4a" stroke-width="1.25"/></svg>
<div class="t" style="left:534.80px;top:409.75px;font-size:14px;line-height:20px;color:#111;transform:scaleX(0.8950);transform-origin:0 0;">String</div>
<div class="b" style="left:631.00px;top:404.55px;width:108.80px;height:26.54px;background:#e2e2e2;border:1.5px solid #b4b4b4;"></div>
<div class="b" style="left:718.70px;top:405.15px;width:1.20px;height:25.54px;background:#b4b4b4;"></div>
<svg style="left:723.8499999999999px;top:414.91999999999996px" width="10" height="6" viewBox="0 0 10 6"><path d="M0.4 0.5L5 5.2L9.6 0.5" fill="none" stroke="#4a4a4a" stroke-width="1.25"/></svg>
<div class="t" style="left:635.05px;top:409.75px;font-size:14px;line-height:20px;color:#111;transform:scaleX(0.8950);transform-origin:0 0;">VARCHAR</div>
<div class="t" style="left:745.30px;top:408.85px;font-size:14.5px;line-height:20px;color:#4a4a4a;transform:scaleX(0.8700);transform-origin:0 0;">25</div>
<div class="t" style="left:826.00px;top:408.85px;font-size:14.5px;line-height:20px;color:#4a4a4a;transform:scaleX(0.8700);transform-origin:0 0;">0</div>
<div class="b" style="left:531.10px;top:432.09px;width:98.60px;height:26.54px;background:#e2e2e2;border:1.5px solid #b4b4b4;"></div>
<div class="b" style="left:608.90px;top:432.69px;width:1.20px;height:25.54px;background:#b4b4b4;"></div>
<svg style="left:613.9px;top:442.46px" width="10" height="6" viewBox="0 0 10 6"><path d="M0.4 0.5L5 5.2L9.6 0.5" fill="none" stroke="#4a4a4a" stroke-width="1.25"/></svg>
<div class="b" style="left:631.00px;top:432.09px;width:108.80px;height:26.54px;background:#e2e2e2;border:1.5px solid #b4b4b4;"></div>
<div class="b" style="left:718.70px;top:432.69px;width:1.20px;height:25.54px;background:#b4b4b4;"></div>
<svg style="left:723.8499999999999px;top:442.46px" width="10" height="6" viewBox="0 0 10 6"><path d="M0.4 0.5L5 5.2L9.6 0.5" fill="none" stroke="#4a4a4a" stroke-width="1.25"/></svg>
<svg style="left:271.4px;top:442.29px" width="5" height="9" viewBox="0 0 5 9"><path d="M0 0L4.9 4.5L0 9z" fill="#444"/></svg>
<div class="t" style="left:276.90px;top:441.39px;font-size:17px;line-height:20px;color:#444;font-weight:bold;">*</div>
<div class="t" style="left:285.50px;top:437.59px;font-size:14px;line-height:20px;color:#222;transform:scaleX(0.8800);transform-origin:0 0;">12</div>
<div class="b" style="left:264.25px;top:572.00px;width:583.75px;height:19.90px;background:#f0f0f0;"></div>
<div class="b" style="left:285.00px;top:572.00px;width:263.80px;height:19.90px;background:#cdcdcd;"></div>
<svg style="left:270.5px;top:577.5px" width="7" height="9" viewBox="0 0 7 9"><path d="M6 0.8L1.6 4.5L6 8.2" fill="none" stroke="#404040" stroke-width="2"/></svg>
<svg style="left:834px;top:577.5px" width="7" height="9" viewBox="0 0 7 9"><path d="M1 0.8L5.4 4.5L1 8.2" fill="none" stroke="#404040" stroke-width="2"/></svg>
</div>
<div class="b" style="left:539.00px;top:611.30px;width:82.30px;height:29.70px;background:#f3f6fa;border:1px solid #d4dbe3;"></div>
<div class="t" style="left:566.18px;top:615.70px;font-size:14.5px;line-height:20px;color:#2a2a2a;transform:scaleX(0.8800);transform-origin:0 0;">Prev</div>
<div class="b" style="left:620.30px;top:611.30px;width:81.80px;height:29.70px;background:#f3f6fa;border:1px solid #d4dbe3;"></div>
<div class="t" style="left:646.28px;top:615.70px;font-size:14.5px;line-height:20px;color:#2a2a2a;transform:scaleX(0.8800);transform-origin:0 0;">Next</div>
<div class="b" style="left:701.10px;top:611.30px;width:82.70px;height:29.70px;background:#f3f6fa;border:1px solid #d4dbe3;"></div>
<div class="t" style="left:731.38px;top:615.70px;font-size:14.5px;line-height:20px;color:#2a2a2a;transform:scaleX(0.8800);transform-origin:0 0;">OK</div>
<div class="b" style="left:782.80px;top:611.30px;width:81.20px;height:29.70px;background:#f3f6fa;border:1px solid #d4dbe3;"></div>
<div class="t" style="left:801.24px;top:615.70px;font-size:14.5px;line-height:20px;color:#2a2a2a;transform:scaleX(0.8800);transform-origin:0 0;">Cancel</div>
<div class="b" style="left:0.00px;top:639.60px;width:864.00px;height:1.40px;background:#a4a4a4;"></div>
</body></html>
